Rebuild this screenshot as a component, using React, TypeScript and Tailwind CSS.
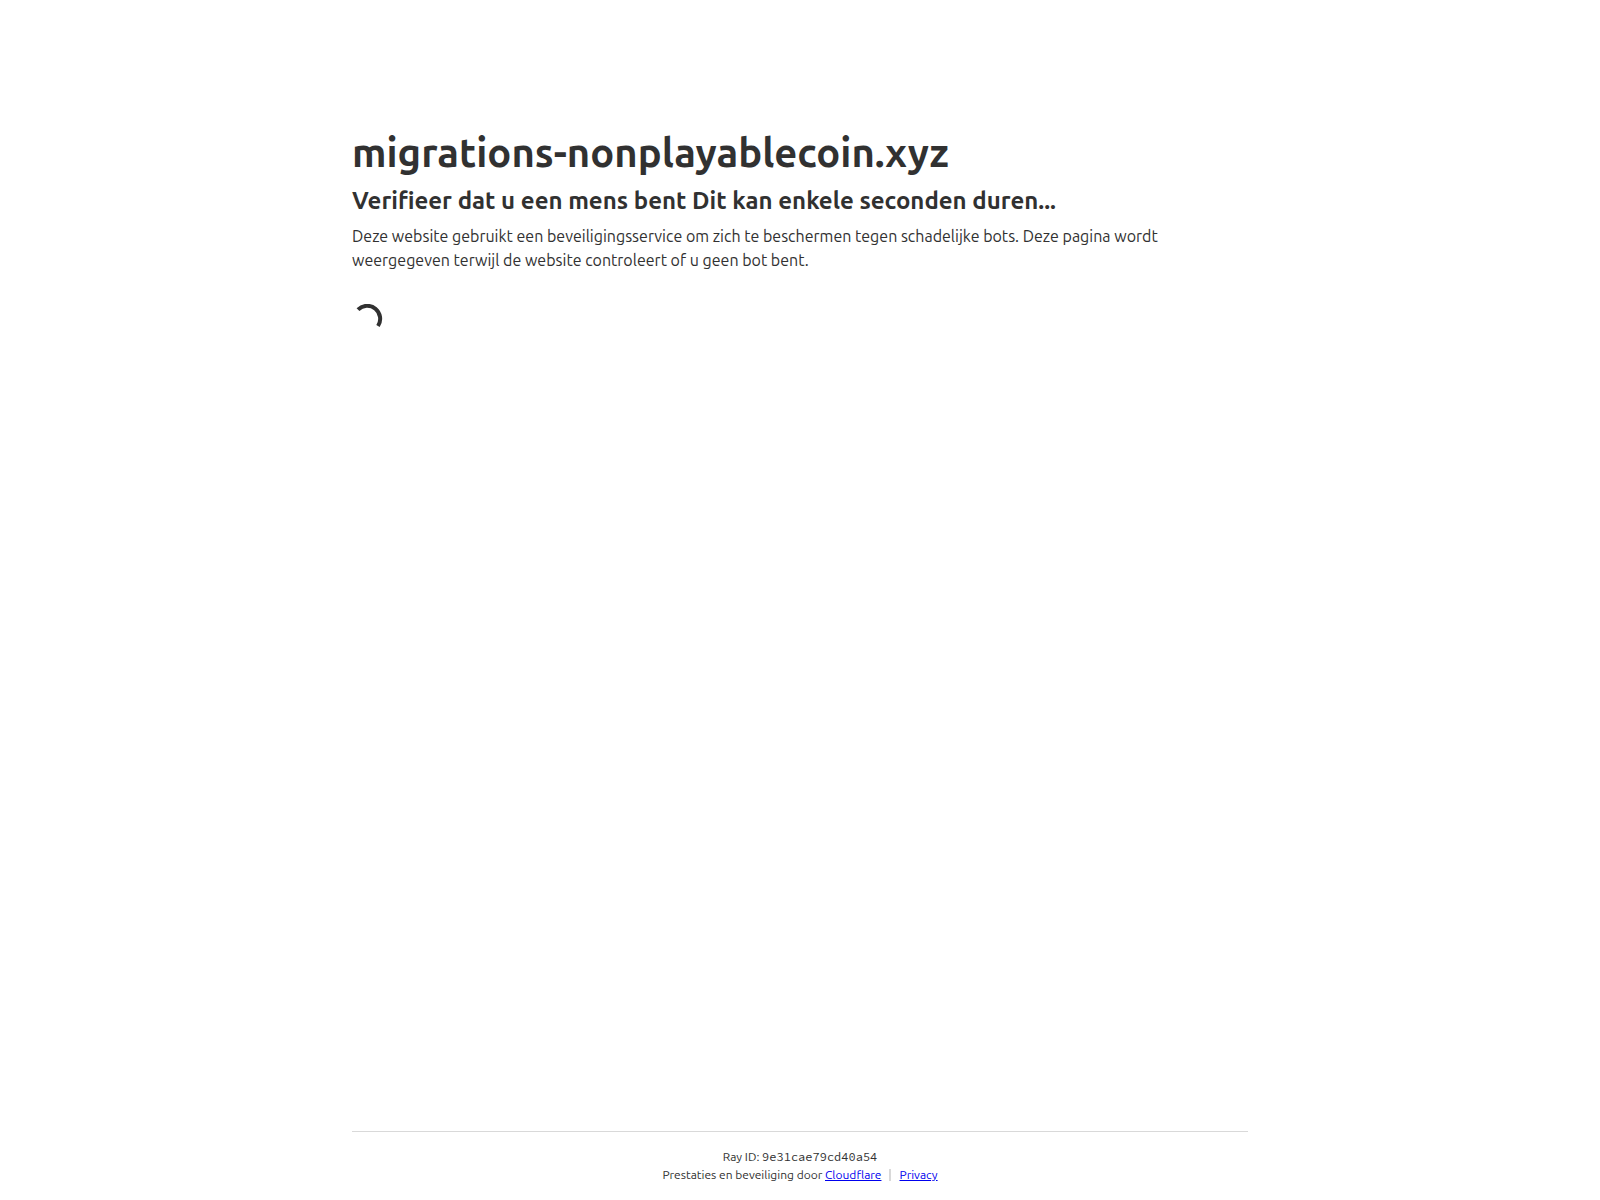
import React from 'react';

const HOST = 'migrations-nonplayablecoin.xyz';
const RAY_ID = '9e31cae79cd40a54';

const Spinner: React.FC = () => (
  <svg
    className="h-8 w-8"
    viewBox="0 0 32 32"
    fill="none"
    stroke="#313131"
    strokeWidth="4"
    role="status"
    aria-label="Laden"
  >
    <path d="M6 5.6A13 13 0 0 1 26 22" />
  </svg>
);

const Footer: React.FC = () => (
  <footer className="mx-auto w-full max-w-[960px] px-8 text-xs text-[#313131]">
    <div className="border-t border-[#d9d9d9] py-4 text-center leading-[18px]">
      <div>
        Ray ID: <code className="font-['Source_Code_Pro','DejaVu_Sans_Mono',monospace]">{RAY_ID}</code>
      </div>
      <div className="flex items-center justify-center">
        <span>
          Prestaties en beveiliging door{' '}
          <a href="#cloudflare" className="text-[#0000ee] underline">Cloudflare</a>
        </span>
        <span className="mx-2 h-3 w-0.5 bg-[#d9d9d9]" />
        <a href="#privacy" className="text-[#0000ee] underline">Privacy</a>
      </div>
    </div>
  </footer>
);

export default function App() {
  return (
    <div className="flex min-h-screen flex-col bg-white font-['Ubuntu','Noto_Sans',sans-serif] text-[#313131]">
      <main className="mx-auto w-full max-w-[960px] grow px-8 pt-[123px]">
        <h1 className="text-[40px] leading-[60px] font-semibold">{HOST}</h1>
        <h2 className="text-2xl leading-9 font-semibold">
          Verifieer dat u een mens bent Dit kan enkele seconden duren...
        </h2>
        <p className="mt-[5px] mb-8 text-base leading-6">
          Deze website gebruikt een beveiligingsservice om zich te beschermen tegen schadelijke bots. Deze pagina wordt
          weergegeven terwijl de website controleert of u geen bot bent.
        </p>
        <Spinner />
      </main>
      <Footer />
    </div>
  );
}
